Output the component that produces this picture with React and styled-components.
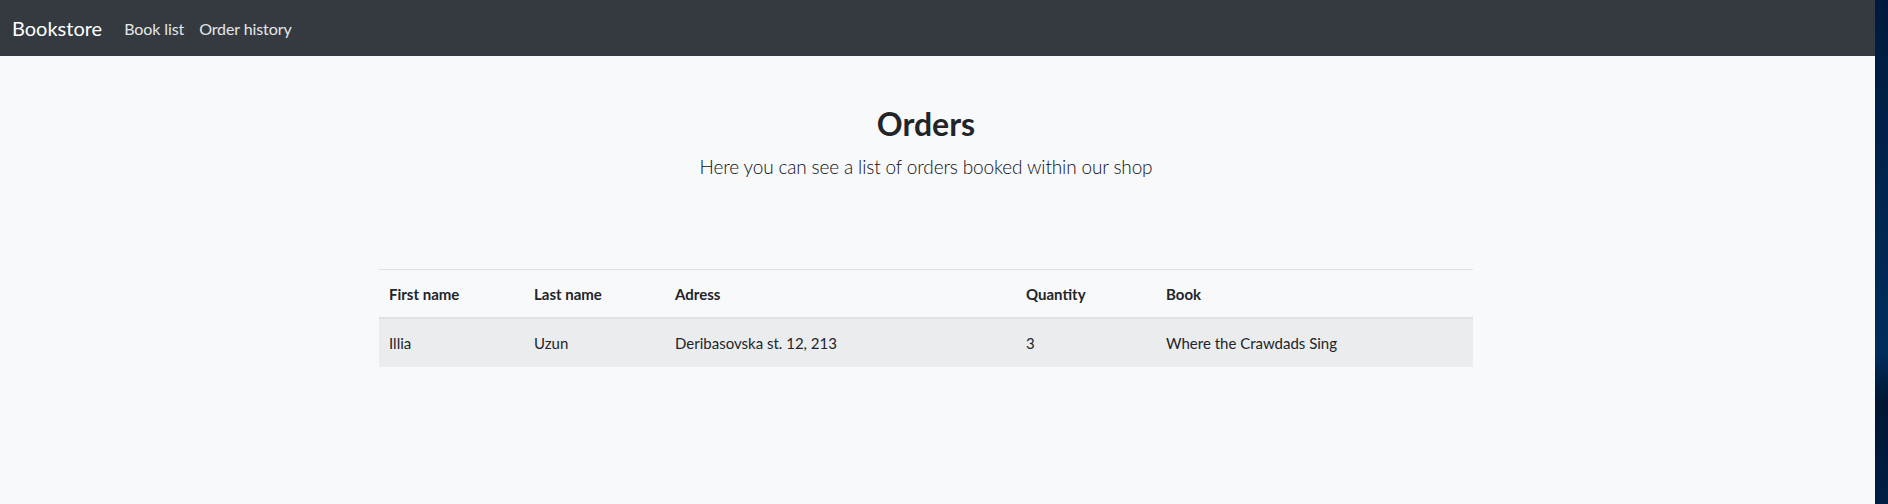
import React from "react";
import styled, { createGlobalStyle } from "styled-components";

const GlobalStyle = createGlobalStyle`
  html, body {
    margin: 0;
    padding: 0;
    background: #00234a;
  }
  body {
    font-family: "Lato", "Noto Sans", sans-serif;
    color: #212529;
  }
`;

const Screen = styled.div`
  display: flex;
  width: 1888px;
  height: 504px;
  overflow: hidden;
`;

const Window = styled.div`
  width: 1875px;
  height: 100%;
  background: #f8f9fa;
  display: flex;
  flex-direction: column;
`;

const Desktop = styled.div`
  flex: 1;
  background: linear-gradient(180deg, #001a3d 0%, #00264f 40%, #002d5c 70%, #001633 80%, #001f45 100%);
`;

const Navbar = styled.nav`
  height: 56px;
  background: #343a40;
  display: flex;
  align-items: center;
  padding: 0 12px;
  box-sizing: border-box;
`;

const Brand = styled.a`
  font-size: 20px;
  color: #fff;
  margin-right: 22px;
  text-decoration: none;
`;

const NavLink = styled.a`
  font-size: 16px;
  color: #e6e7e8;
  margin-right: 15px;
  text-decoration: none;
  letter-spacing: -0.1px;
`;

const Main = styled.main`
  display: flex;
  flex-direction: column;
  align-items: center;
  padding-right: 23px;
`;

const Title = styled.h2`
  margin: 49px 0 10px;
  font-size: 32px;
  font-weight: 700;
  line-height: 1.2;
`;

const Lead = styled.p`
  margin: 0;
  font-size: 19px;
  font-weight: 300;
  line-height: 1.5;
  color: #0d0f12;
  letter-spacing: -0.15px;
`;

const Table = styled.table`
  width: 1094px;
  margin-top: 87px;
  border-collapse: collapse;
  font-size: 15px;
`;

const HeadCell = styled.th`
  text-align: left;
  font-weight: 700;
  height: 49px;
  padding: 0 10px;
  border-top: 1px solid #dee2e6;
  border-bottom: 2px solid #dee2e6;
  width: ${({ w }) => w}px;
  box-sizing: border-box;
`;

const Row = styled.tr`
  background: #ebecee;
`;

const Cell = styled.td`
  height: 48px;
  padding: 0 10px;
  font-weight: 400;
`;

const columns = [
  { key: "first", label: "First name", w: 145 },
  { key: "last", label: "Last name", w: 141 },
  { key: "address", label: "Adress", w: 351 },
  { key: "qty", label: "Quantity", w: 140 },
  { key: "book", label: "Book", w: 317 },
];

const orders = [
  {
    first: "Illia",
    last: "Uzun",
    address: "Deribasovska st. 12, 213",
    qty: 3,
    book: "Where the Crawdads Sing",
  },
];

export default function App() {
  return (
    <>
      <GlobalStyle />
      <Screen>
        <Window>
          <Navbar>
            <Brand href="#">Bookstore</Brand>
            <NavLink href="#">Book list</NavLink>
            <NavLink href="#">Order history</NavLink>
          </Navbar>
          <Main>
            <Title>Orders</Title>
            <Lead>Here you can see a list of orders booked within our shop</Lead>
            <Table>
              <thead>
                <tr>
                  {columns.map((c) => (
                    <HeadCell key={c.key} w={c.w}>
                      {c.label}
                    </HeadCell>
                  ))}
                </tr>
              </thead>
              <tbody>
                {orders.map((o, i) => (
                  <Row key={i}>
                    {columns.map((c) => (
                      <Cell key={c.key}>{o[c.key]}</Cell>
                    ))}
                  </Row>
                ))}
              </tbody>
            </Table>
          </Main>
        </Window>
        <Desktop />
      </Screen>
    </>
  );
}
